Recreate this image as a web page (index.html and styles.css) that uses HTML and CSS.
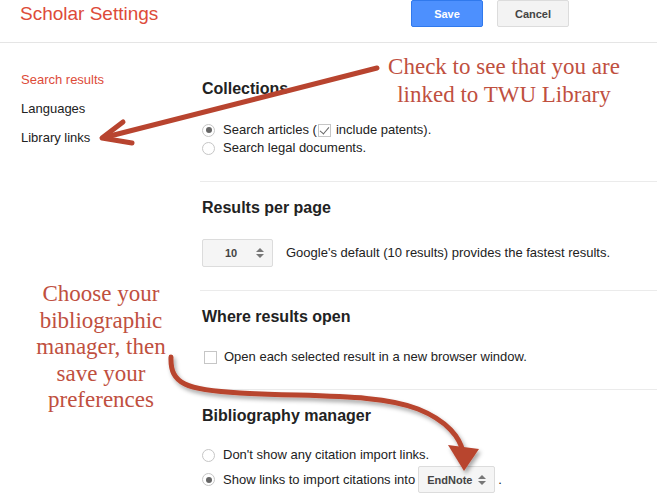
FILE: index.html
```html
<!DOCTYPE html>
<html lang="en">

<head>
    <meta charset="UTF-8">
    <title>Scholar Settings</title>
    <link rel="stylesheet" href="styles.css">
</head>

<body>
    <div class="header">
        <div class="title">Scholar Settings</div>
        <button class="btn btn-save">Save</button>
        <button class="btn btn-cancel">Cancel</button>
    </div>

    <div class="page">
        <div class="nav">
            <div class="nav-item active">Search results</div>
            <div class="nav-item">Languages</div>
            <div class="nav-item">Library links</div>
        </div>

        <div class="main">
            <div class="section first">
                <h2>Collections</h2>
                <div class="row">
                    <span class="radio checked"></span>
                    Search articles (<span class="check checked"></span>include patents).
                </div>
                <div class="row">
                    <span class="radio"></span>
                    Search legal documents.
                </div>
            </div>

            <div class="section">
                <h2>Results per page</h2>
                <div class="row">
                    <span class="select num">10<span class="spin"></span></span>
                    Google's default (10 results) provides the fastest results.
                </div>
            </div>

            <div class="section">
                <h2>Where results open</h2>
                <div class="row">
                    <span class="check box-only"></span>
                    Open each selected result in a new browser window.
                </div>
            </div>

            <div class="section last">
                <h2>Bibliography manager</h2>
                <div class="row">
                    <span class="radio"></span>
                    Don't show any citation import links.
                </div>
                <div class="row with-select">
                    <span class="radio checked"></span>
                    Show links to import citations into<span class="select endnote">EndNote<span class="spin"></span></span>.
                </div>
            </div>
        </div>
    </div>

    <!-- callouts drawn over the page -->
    <div class="note note-top">Check to see that you are<br>linked to TWU Library</div>
    <div class="note note-left">Choose your<br>bibliographic<br>manager, then<br>save your<br>preferences</div>

    <svg class="arrows" width="657" height="498" viewBox="0 0 657 498">
        <defs>
            <filter id="shadow" x="-10%" y="-10%" width="130%" height="140%">
                <feDropShadow dx="2" dy="3" stdDeviation="2" flood-color="#000" flood-opacity="0.35" />
            </filter>
        </defs>
        <g stroke="#b8442f" stroke-width="5" fill="none" stroke-linecap="round" stroke-linejoin="round">
            <line x1="377" y1="68" x2="106" y2="137" />
            <polyline points="123,122 102,138 132,143" />
        </g>
        <g filter="url(#shadow)">
            <path d="M171,357 C170,384 186,390 240,393 C320,397 380,394 418,409 C448,421 460,438 463,452"
                stroke="#b8442f" stroke-width="5" fill="none" stroke-linecap="round" />
            <polygon points="448,445 479,449 464,471" fill="#b8442f" />
        </g>
    </svg>
</body>

</html>
```

FILE: styles.css
```css
body {
    margin: 0;
    font-family: Arial, "Liberation Sans", sans-serif;
    font-size: 13px;
    color: #222;
    background: #fff;
    width: 657px;
    height: 498px;
    overflow: hidden;
    position: relative;
}

.header {
    display: flex;
    align-items: flex-start;
    height: 42px;
    border-bottom: 1px solid #e5e5e5;
    padding-left: 20px;
}

.title {
    width: 391px;
    color: #dd4b39;
    font-size: 19px;
    line-height: 28px;
}

.btn {
    width: 72px;
    height: 27px;
    border-radius: 2px;
    font-family: inherit;
    font-size: 11px;
    font-weight: bold;
    padding: 0;
    margin-right: 14px;
}

.btn-save {
    background: #4d90fe;
    border: 1px solid #3079ed;
    color: #fff;
}

.btn-cancel {
    background: #f3f3f3;
    border: 1px solid #dcdcdc;
    color: #444;
}

.page {
    display: flex;
}

.nav {
    width: 179px;
    padding: 22px 0 0 21px;
}

.nav-item {
    line-height: 29px;
    color: #222;
}

.nav-item.active {
    color: #dd4b39;
}

.main {
    flex: 1;
}

.section {
    border-top: 1px solid #ebebeb;
    padding: 16px 0 23px 2px;
}

.section.first {
    border-top: none;
    padding-top: 36px;
    padding-bottom: 24px;
}

.section h2 {
    margin: 0 0 21px 0;
    font-size: 16px;
    line-height: 20px;
    font-weight: bold;
    color: #222;
}

.section.first h2 {
    margin-bottom: 22px;
}

.section.last h2 {
    margin-bottom: 20px;
}

.row {
    display: flex;
    align-items: center;
    min-height: 18px;
    line-height: 18px;
    white-space: nowrap;
}

.row.with-select {
    margin-top: 2px;
}

.radio {
    width: 13px;
    height: 13px;
    border: 1px solid #c6c6c6;
    border-radius: 50%;
    box-sizing: border-box;
    background: #fff;
    margin-right: 8px;
    position: relative;
    flex: none;
}

.radio.checked::after {
    content: "";
    position: absolute;
    left: 2.5px;
    top: 2.5px;
    width: 6px;
    height: 6px;
    border-radius: 50%;
    background: #666;
}

.check {
    width: 13px;
    height: 13px;
    border: 1px solid #c6c6c6;
    box-sizing: border-box;
    background: #fff;
    position: relative;
    flex: none;
    margin: 0 5px 0 1px;
}

.check.checked::after {
    content: "";
    position: absolute;
    left: 3px;
    top: 0;
    width: 4px;
    height: 8px;
    border: solid #666;
    border-width: 0 1.5px 1.5px 0;
    transform: rotate(40deg);
}

.check.box-only {
    margin: 0 7px 0 2px;
}

.select {
    display: inline-flex;
    align-items: center;
    box-sizing: border-box;
    height: 28px;
    border: 1px solid #dcdcdc;
    border-radius: 2px;
    background: #f5f5f5;
    font-size: 11px;
    font-weight: bold;
    color: #444;
    position: relative;
    flex: none;
}

.select.num {
    width: 71px;
    padding-left: 22px;
    margin-right: 13px;
}

.select.endnote {
    width: 77px;
    height: 27px;
    padding-left: 8px;
    margin: 0 3px 0 3px;
}

.spin {
    position: absolute;
    right: 8px;
    top: 8px;
    width: 8px;
    height: 10px;
}

.spin::before,
.spin::after {
    content: "";
    position: absolute;
    left: 0;
    border-left: 4px solid transparent;
    border-right: 4px solid transparent;
}

.spin::before {
    top: 0;
    border-bottom: 4px solid #777;
}

.spin::after {
    bottom: 0;
    border-top: 4px solid #777;
}

.note {
    position: absolute;
    font-family: "Liberation Serif", "DejaVu Serif", serif;
    color: #c0503f;
    text-align: center;
    font-size: 23px;
}

.note-top {
    left: 376px;
    top: 53px;
    width: 256px;
    line-height: 28px;
}

.note-left {
    left: 20px;
    top: 281px;
    width: 162px;
    line-height: 26.5px;
}

.arrows {
    position: absolute;
    left: 0;
    top: 0;
    pointer-events: none;
}
```
